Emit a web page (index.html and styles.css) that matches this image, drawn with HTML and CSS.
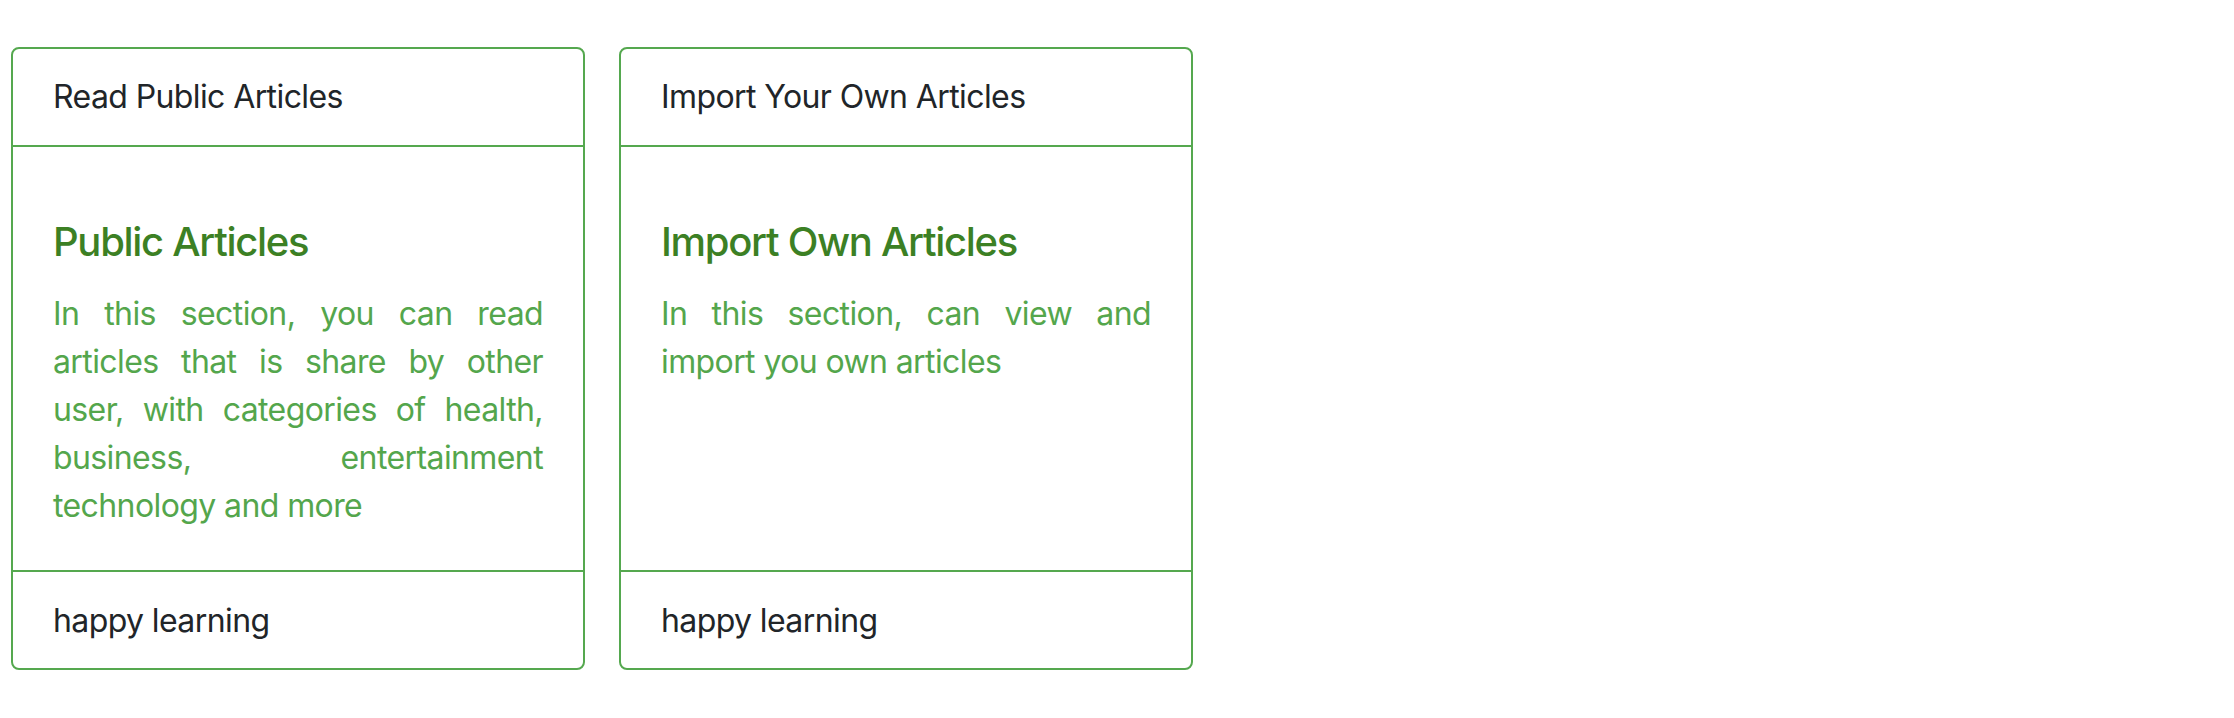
FILE: index.html
```html
<!DOCTYPE html>
<html lang="en">
<head>
<meta charset="utf-8">
<title>Articles</title>
<link rel="stylesheet" href="styles.css">
</head>
<body>
<div class="row">
  <div class="card">
    <div class="card-header">Read Public Articles</div>
    <div class="card-body">
      <h5 class="card-title">Public Articles</h5>
      <p class="card-text">In this section, you can read articles that is share by other user, with categories of health, business, entertainment technology and more</p>
    </div>
    <div class="card-footer">happy learning</div>
  </div>
  <div class="card">
    <div class="card-header">Import Your Own Articles</div>
    <div class="card-body">
      <h5 class="card-title">Import Own Articles</h5>
      <p class="card-text">In this section, can view and import you own articles</p>
    </div>
    <div class="card-footer">happy learning</div>
  </div>
</div>
</body>
</html>
```

FILE: styles.css
```css
* { box-sizing: border-box; }
html, body { margin: 0; padding: 0; background: #fff; }
body {
  font-family: Inter, "Noto Sans", sans-serif;
  font-size: 32px;
  line-height: 1.5;
  letter-spacing: -0.6px;
  color: #212529;
}
.row {
  display: flex;
  gap: 34px;
  padding: 47px 0 0 11px;
  align-items: stretch;
}
.card {
  width: 574px;
  display: flex;
  flex-direction: column;
  border: 2px solid #55a84f;
  border-radius: 8px;
}
.card-header {
  padding: 24px 40px;
  border-bottom: 2px solid #55a84f;
}
.card-body {
  flex: 1;
  padding: 71px 40px 40px;
}
.card-title {
  margin: 0 0 24px;
  font-size: 40px;
  line-height: 1.2;
  font-weight: 500;
  letter-spacing: -1.3px;
  color: #3c8024;
}
.card-text {
  margin: 0;
  text-align: justify;
  color: #54a64c;
}
.card-footer {
  padding: 25px 40px 23px;
  border-top: 2px solid #55a84f;
}
```
